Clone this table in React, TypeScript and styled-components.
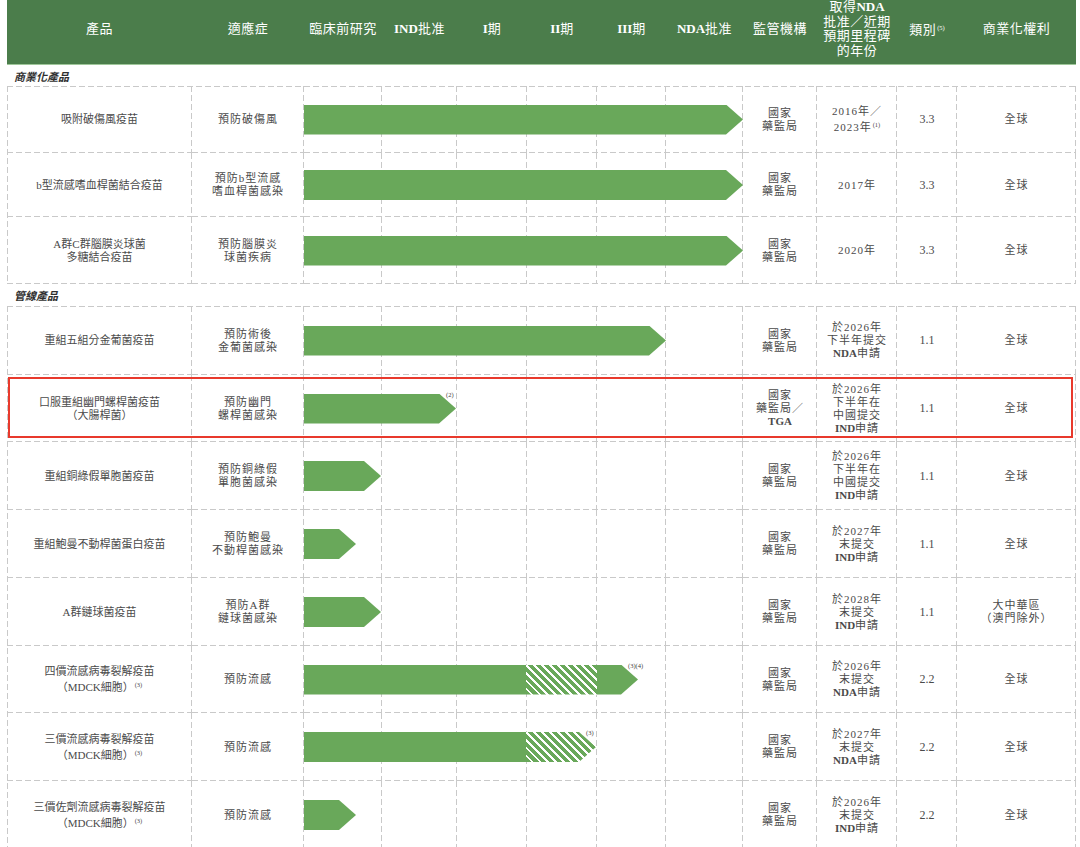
import React from "react";
import styled, { createGlobalStyle } from "styled-components";

const HEAD_COLS = "185px 112px 78px 75px 70px 70px 69px 77px 74px 80px 60px 119px";
const BODY_COLS = "185px 112px 439px 74px 80px 60px 119px";

const LINE = "#c9c9c9";
const H_DASH = `repeating-linear-gradient(to right, ${LINE} 0 6px, transparent 6px 9px)`;
const V_DASH = `repeating-linear-gradient(to bottom, ${LINE} 0 6px, transparent 6px 9px)`;
const BAR = "#69a85a";
const FONT = `"Liberation Serif", "Noto Sans CJK TC", serif`;

const GlobalStyle = createGlobalStyle`
  html, body { margin: 0; padding: 0; background: #ffffff; }
  body { font-family: ${FONT}; }
  * { box-sizing: border-box; }
`;

const Page = styled.div`
  width: 1080px;
  padding: 0 4px 0 7px;
`;

const Header = styled.div`
  display: grid;
  grid-template-columns: ${HEAD_COLS};
  height: 65px;
  background: #4b7d4b;
  border-bottom: 1px solid #9fc79a;
  color: #ffffff;
`;

const HeadCell = styled.div`
  display: flex;
  align-items: center;
  justify-content: center;
  padding-bottom: 6px;
`;

const HeadText = styled.div`
  text-align: center;
  font-size: 13px;
  line-height: 14.5px;
  letter-spacing: 0.5px;
  white-space: nowrap;
`;

const B = styled.b`
  font-weight: 700;
  letter-spacing: 0;
`;

const Sup = styled.span`
  font-size: 6.5px;
  letter-spacing: 0;
  vertical-align: 4px;
  margin-left: 1px;
`;

const SectionLabel = styled.div<{ $h: number }>`
  height: ${(p) => p.$h}px;
  display: flex;
  align-items: center;
  padding-left: 7px;
  font-family: "Noto Sans CJK TC", sans-serif;
  font-size: 11px;
  font-weight: 700;
  font-style: italic;
  color: #2f2f2f;
`;

const Section = styled.div`
  background-image: ${H_DASH}, ${V_DASH};
  background-size: 100% 1px, 1px 100%;
  background-position: 0 0, 0 0;
  background-repeat: no-repeat;
`;

const Row = styled.div<{ $h: number }>`
  position: relative;
  display: grid;
  grid-template-columns: ${BODY_COLS};
  height: ${(p) => p.$h}px;
`;

const Cell = styled.div`
  display: flex;
  align-items: center;
  justify-content: center;
  background-image: ${H_DASH}, ${V_DASH};
  background-size: 100% 1px, 1px 100%;
  background-position: 0 100%, 100% 0;
  background-repeat: no-repeat;
`;

const CellText = styled.div<{ $tight?: boolean; $num?: boolean }>`
  text-align: center;
  font-size: ${(p) => (p.$num ? "12px" : "11px")};
  line-height: 13px;
  letter-spacing: ${(p) => (p.$tight || p.$num ? "0" : "1px")};
  color: #4a4a4a;
  white-space: nowrap;
`;

const Stages = styled.div`
  display: flex;
  align-items: center;
  background-image: ${H_DASH}, ${V_DASH}, ${V_DASH}, ${V_DASH}, ${V_DASH}, ${V_DASH}, ${V_DASH};
  background-size: 100% 1px, 1px 100%, 1px 100%, 1px 100%, 1px 100%, 1px 100%, 1px 100%;
  background-position: 0 100%, 77px 0, 152px 0, 222px 0, 292px 0, 361px 0, 438px 0;
  background-repeat: no-repeat;
`;

const BarWrap = styled.div<{ $w: number }>`
  position: relative;
  width: ${(p) => p.$w}px;
  height: 30px;
`;

const Arrow = styled.div`
  display: flex;
  width: 100%;
  height: 100%;
  clip-path: polygon(0 0, calc(100% - 17px) 0, 100% 50%, calc(100% - 17px) 100%, 0 100%);
`;

const Solid = styled.div<{ $w?: number }>`
  background: ${BAR};
  flex: ${(p) => (p.$w ? `0 0 ${p.$w}px` : "1 1 auto")};
`;

const Hatch = styled.div<{ $w?: number }>`
  background: repeating-linear-gradient(45deg, ${BAR} 0 3.6px, #ffffff 3.6px 5.6px);
  flex: ${(p) => (p.$w ? `0 0 ${p.$w}px` : "1 1 auto")};
`;

const Note = styled.span`
  position: absolute;
  top: -3px;
  left: calc(100% - 10px);
  font-size: 6.5px;
  color: #444;
  white-space: nowrap;
`;

const Highlight = styled.div`
  position: absolute;
  top: 2px;
  left: 1px;
  right: 3px;
  bottom: 4px;
  border: 2px solid #e8392c;
  pointer-events: none;
`;

type Seg = { kind: "solid" | "hatch"; w?: number };
type RowData = {
  h: number;
  product: React.ReactNode;
  indication: React.ReactNode;
  bar: { w: number; segs?: Seg[]; note?: string };
  regulator: React.ReactNode;
  milestone: React.ReactNode;
  category: string;
  rights: React.ReactNode;
  highlight?: boolean;
};

const NMPA = (
  <>
    國家
    <br />
    藥監局
  </>
);

const commercial: RowData[] = [
  {
    h: 67,
    product: "吸附破傷風疫苗",
    indication: "預防破傷風",
    bar: { w: 439 },
    regulator: NMPA,
    milestone: (
      <>
        2016年／
        <br />
        2023年<Sup>(1)</Sup>
      </>
    ),
    category: "3.3",
    rights: "全球",
  },
  {
    h: 64,
    product: "b型流感嗜血桿菌結合疫苗",
    indication: (
      <>
        預防b型流感
        <br />
        嗜血桿菌感染
      </>
    ),
    bar: { w: 439 },
    regulator: NMPA,
    milestone: "2017年",
    category: "3.3",
    rights: "全球",
  },
  {
    h: 67,
    product: (
      <>
        A群C群腦膜炎球菌
        <br />
        多糖結合疫苗
      </>
    ),
    indication: (
      <>
        預防腦膜炎
        <br />
        球菌疾病
      </>
    ),
    bar: { w: 439 },
    regulator: NMPA,
    milestone: "2020年",
    category: "3.3",
    rights: "全球",
  },
];

const pipeline: RowData[] = [
  {
    h: 69,
    product: "重組五組分金葡菌疫苗",
    indication: (
      <>
        預防術後
        <br />
        金葡菌感染
      </>
    ),
    bar: { w: 362 },
    regulator: NMPA,
    milestone: (
      <>
        於2026年
        <br />
        下半年提交
        <br />
        <B>NDA</B>申請
      </>
    ),
    category: "1.1",
    rights: "全球",
  },
  {
    h: 67,
    highlight: true,
    product: (
      <>
        口服重組幽門螺桿菌疫苗
        <br />
        （大腸桿菌）
      </>
    ),
    indication: (
      <>
        預防幽門
        <br />
        螺桿菌感染
      </>
    ),
    bar: { w: 152, note: "(2)" },
    regulator: (
      <>
        國家
        <br />
        藥監局／
        <br />
        <B>TGA</B>
      </>
    ),
    milestone: (
      <>
        於2026年
        <br />
        下半年在
        <br />
        中國提交
        <br />
        <B>IND</B>申請
      </>
    ),
    category: "1.1",
    rights: "全球",
  },
  {
    h: 68,
    product: "重組銅綠假單胞菌疫苗",
    indication: (
      <>
        預防銅綠假
        <br />
        單胞菌感染
      </>
    ),
    bar: { w: 77 },
    regulator: NMPA,
    milestone: (
      <>
        於2026年
        <br />
        下半年在
        <br />
        中國提交
        <br />
        <B>IND</B>申請
      </>
    ),
    category: "1.1",
    rights: "全球",
  },
  {
    h: 68,
    product: "重組鮑曼不動桿菌蛋白疫苗",
    indication: (
      <>
        預防鮑曼
        <br />
        不動桿菌感染
      </>
    ),
    bar: { w: 52 },
    regulator: NMPA,
    milestone: (
      <>
        於2027年
        <br />
        末提交
        <br />
        <B>IND</B>申請
      </>
    ),
    category: "1.1",
    rights: "全球",
  },
  {
    h: 68,
    product: "A群鏈球菌疫苗",
    indication: (
      <>
        預防A群
        <br />
        鏈球菌感染
      </>
    ),
    bar: { w: 77 },
    regulator: NMPA,
    milestone: (
      <>
        於2028年
        <br />
        末提交
        <br />
        <B>IND</B>申請
      </>
    ),
    category: "1.1",
    rights: (
      <>
        大中華區
        <br />
        （澳門除外）
      </>
    ),
  },
  {
    h: 67,
    product: (
      <>
        四價流感病毒裂解疫苗
        <br />
        （MDCK細胞）<Sup>(3)</Sup>
      </>
    ),
    indication: "預防流感",
    bar: {
      w: 334,
      note: "(3)(4)",
      segs: [
        { kind: "solid", w: 222 },
        { kind: "hatch", w: 71 },
        { kind: "solid" },
      ],
    },
    regulator: NMPA,
    milestone: (
      <>
        於2026年
        <br />
        末提交
        <br />
        <B>NDA</B>申請
      </>
    ),
    category: "2.2",
    rights: "全球",
  },
  {
    h: 68,
    product: (
      <>
        三價流感病毒裂解疫苗
        <br />
        （MDCK細胞）<Sup>(3)</Sup>
      </>
    ),
    indication: "預防流感",
    bar: {
      w: 292,
      note: "(3)",
      segs: [
        { kind: "solid", w: 222 },
        { kind: "hatch" },
      ],
    },
    regulator: NMPA,
    milestone: (
      <>
        於2027年
        <br />
        末提交
        <br />
        <B>NDA</B>申請
      </>
    ),
    category: "2.2",
    rights: "全球",
  },
  {
    h: 68,
    product: (
      <>
        三價佐劑流感病毒裂解疫苗
        <br />
        （MDCK細胞）<Sup>(3)</Sup>
      </>
    ),
    indication: "預防流感",
    bar: { w: 52 },
    regulator: NMPA,
    milestone: (
      <>
        於2026年
        <br />
        末提交
        <br />
        <B>IND</B>申請
      </>
    ),
    category: "2.2",
    rights: "全球",
  },
];

function ProgressBar({ w, segs, note }: RowData["bar"]) {
  const parts: Seg[] = segs ?? [{ kind: "solid" }];
  return (
    <BarWrap $w={w}>
      <Arrow>
        {parts.map((s, i) =>
          s.kind === "solid" ? <Solid key={i} $w={s.w} /> : <Hatch key={i} $w={s.w} />
        )}
      </Arrow>
      {note && <Note>{note}</Note>}
    </BarWrap>
  );
}

function TableRow({ r }: { r: RowData }) {
  return (
    <Row $h={r.h}>
      <Cell>
        <CellText $tight>{r.product}</CellText>
      </Cell>
      <Cell>
        <CellText>{r.indication}</CellText>
      </Cell>
      <Stages>
        <ProgressBar {...r.bar} />
      </Stages>
      <Cell>
        <CellText>{r.regulator}</CellText>
      </Cell>
      <Cell>
        <CellText>{r.milestone}</CellText>
      </Cell>
      <Cell>
        <CellText $num>{r.category}</CellText>
      </Cell>
      <Cell>
        <CellText>{r.rights}</CellText>
      </Cell>
      {r.highlight && <Highlight />}
    </Row>
  );
}

function H({ children }: { children: React.ReactNode }) {
  return (
    <HeadCell>
      <HeadText>{children}</HeadText>
    </HeadCell>
  );
}

export default function App() {
  return (
    <>
      <GlobalStyle />
      <Page>
        <Header>
          <H>產品</H>
          <H>適應症</H>
          <H>臨床前研究</H>
          <H>
            <B>IND</B>批准
          </H>
          <H>
            <B>I</B>期
          </H>
          <H>
            <B>II</B>期
          </H>
          <H>
            <B>III</B>期
          </H>
          <H>
            <B>NDA</B>批准
          </H>
          <H>監管機構</H>
          <H>
            取得<B>NDA</B>
            <br />
            批准／近期
            <br />
            預期里程碑
            <br />
            的年份
          </H>
          <H>
            類別<Sup>(5)</Sup>
          </H>
          <H>商業化權利</H>
        </Header>

        <SectionLabel $h={21}>商業化產品</SectionLabel>
        <Section>
          {commercial.map((r, i) => (
            <TableRow key={i} r={r} />
          ))}
        </Section>

        <SectionLabel $h={22}>管線產品</SectionLabel>
        <Section>
          {pipeline.map((r, i) => (
            <TableRow key={i} r={r} />
          ))}
        </Section>
      </Page>
    </>
  );
}
